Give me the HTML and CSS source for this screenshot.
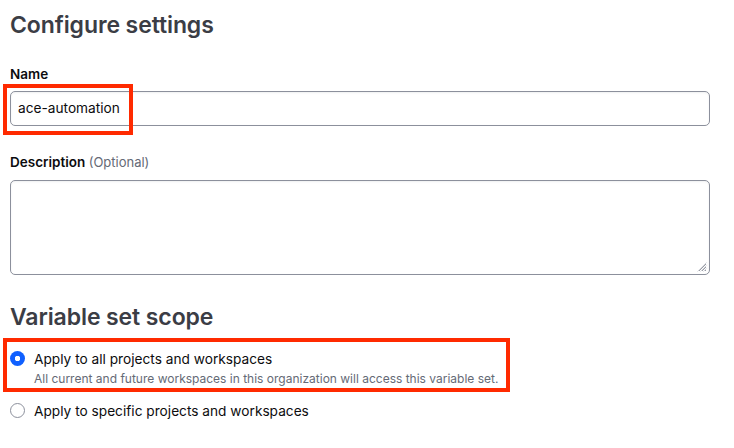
FILE: index.html
```html
<!DOCTYPE html>
<html>
<head>
<meta charset="utf-8">
<link rel="stylesheet" href="styles.css">
</head>
<body>
<main class="page">
  <h1 class="title">Configure settings</h1>
  <div class="field">
    <label class="label">Name</label>
    <div class="control">
      <div class="input">ace-automation</div>
      <span class="mark mark-name"></span>
    </div>
  </div>
  <div class="field field-desc">
    <label class="label">Description <span class="optional">(Optional)</span></label>
    <div class="textarea">
      <svg class="grip" width="10" height="10" viewBox="0 0 10 10"><path d="M9 2L2 9M9 5L5 9M9 8L8 9" stroke="#9a9da6" stroke-width="1" fill="none"/><path d="M9.5 0.5L0.5 9.5M9.5 3.5L3.5 9.5M9.5 6.5L6.5 9.5" stroke="#c8cad0" stroke-width="0.8" fill="none"/></svg>
    </div>
  </div>
  <h2 class="title title-scope">Variable set scope</h2>
  <div class="options">
    <div class="option option-first">
      <span class="radio radio-on"></span>
      <div class="option-text">
        <div class="option-label">Apply to all projects and workspaces</div>
        <div class="option-help">All current and future workspaces in this organization will access this variable set.</div>
      </div>
      <span class="mark mark-scope"></span>
    </div>
    <div class="option">
      <span class="radio"></span>
      <div class="option-text">
        <div class="option-label">Apply to specific projects and workspaces</div>
      </div>
    </div>
  </div>
</main>
</body>
</html>
```
FILE: styles.css
```css
* { box-sizing: border-box; }
html, body { margin: 0; padding: 0; background: #ffffff; }
body {
  font-family: Inter, "Noto Sans", "Liberation Sans", sans-serif;
  color: #0c0c0e;
  width: 734px;
  height: 448px;
  overflow: hidden;
}
.page {
  padding: 0 24px 0 10px;
}
.title {
  margin: 0;
  font-size: 23px;
  font-weight: 600;
  color: #3b3d45;
  line-height: 32px;
  padding-top: 9px;
  letter-spacing: -0.1px;
}
.field { margin-top: 24px; }
.field-desc { margin-top: 27px; }
.label {
  display: block;
  font-size: 13.5px;
  font-weight: 600;
  line-height: 18px;
  color: #0c0c0e;
}
.optional {
  font-weight: 400;
  color: #656a76;
  font-size: 13px;
}
.control { position: relative; margin-top: 8px; }
.input {
  height: 35px;
  border: 1px solid #8c909c;
  border-radius: 5px;
  padding: 0 7px;
  font-size: 13.7px;
  line-height: 33px;
  color: #0c0c0e;
  box-shadow: inset 0 1px 2px rgba(97,104,117,0.1);
}
.textarea {
  position: relative;
  margin-top: 9px;
  height: 95px;
  border: 1px solid #8c909c;
  border-radius: 5px;
  box-shadow: inset 0 1px 2px rgba(97,104,117,0.1);
}
.grip { position: absolute; right: 2px; bottom: 2px; }
.title-scope { margin-top: 26px; padding-top: 0; }
.options { margin-top: 16px; }
.option {
  position: relative;
  display: flex;
  align-items: flex-start;
  gap: 9px;
}
.option-first { padding-bottom: 13px; }
.radio {
  flex: none;
  width: 15px;
  height: 15px;
  border-radius: 50%;
  border: 1px solid #8c909c;
  background: #fff;
  margin-top: 2px;
}
.radio-on {
  border: none;
  background: radial-gradient(circle, #ffffff 0 2.5px, #1060ff 3px);
}
.option-label {
  font-size: 13.7px;
  line-height: 20px;
  color: #0c0c0e;
}
.option-help {
  font-size: 12px;
  line-height: 18px;
  color: #656a76;
  margin-top: 1px;
}
.mark {
  position: absolute;
  border: 4.5px solid #ff2a00;
  pointer-events: none;
}
.mark-name { left: -7px; top: -7px; width: 130px; height: 51px; }
.mark-scope { left: -7px; top: -11px; width: 507px; height: 54px; }
```
